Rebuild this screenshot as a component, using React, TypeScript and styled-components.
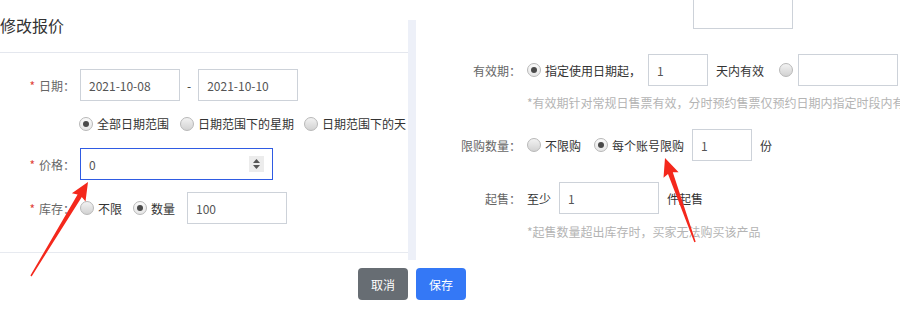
import React from 'react';
import styled, { createGlobalStyle } from 'styled-components';

const GlobalStyle = createGlobalStyle`
  html, body {
    margin: 0;
    padding: 0;
    background: #fff;
  }
  body {
    font-family: "Noto Sans CJK SC", "Liberation Sans", sans-serif;
    font-size: 12px;
    color: #333;
  }
`;

const Page = styled.div`
  position: relative;
  width: 900px;
  height: 330px;
  overflow: hidden;
  background: #fff;
`;

const Top = styled.div`
  display: flex;
  height: 260px;
`;

const LeftPanel = styled.div`
  width: 408px;
  height: 253px;
  box-sizing: border-box;
  border-bottom: 1px solid #e7eaf0;
  overflow: hidden;
  white-space: nowrap;
`;

const Header = styled.div`
  height: 53px;
  box-sizing: border-box;
  border-bottom: 1px solid #e4e7ee;
  font-size: 16px;
  line-height: 50px;
  color: #333;
`;

const Body = styled.div`
  padding-top: 16px;
`;

const Strip = styled.div`
  width: 8px;
  margin-top: 20px;
  background: #edf0f8;
`;

const RightPanel = styled.div`
  flex: 1;
  overflow: hidden;
  white-space: nowrap;
`;

const Row = styled.div<{ $mt?: number; $pl?: number }>`
  display: flex;
  align-items: center;
  margin-top: ${(p) => p.$mt ?? 0}px;
  padding-left: ${(p) => p.$pl ?? 0}px;
`;

const Label = styled.div<{ $w: number; $gap: number }>`
  width: ${(p) => p.$w}px;
  margin-right: ${(p) => p.$gap}px;
  flex-shrink: 0;
  text-align: right;
  color: #666;
  font-size: 12px;
`;

const Star = styled.span`
  color: #e0443a;
  margin-right: 4px;
`;

const Field = styled.div<{ $w: number; $ml?: number; $focus?: boolean }>`
  position: relative;
  flex-shrink: 0;
  box-sizing: border-box;
  width: ${(p) => p.$w}px;
  height: 32px;
  margin-left: ${(p) => p.$ml ?? 0}px;
  padding-left: 8px;
  display: flex;
  align-items: center;
  border: 1px solid ${(p) => (p.$focus ? '#2f5be3' : '#cdd2d9')};
  color: #555;
  font-size: 12px;
  background: #fff;
`;

const Spinner = styled.div`
  position: absolute;
  right: 8px;
  top: 7px;
  width: 15px;
  height: 16px;
  background: #ececec;
  display: flex;
  align-items: center;
  justify-content: center;
`;

const Text = styled.span<{ $ml?: number }>`
  margin-left: ${(p) => p.$ml ?? 0}px;
  color: #333;
  font-size: 12px;
`;

const Option = styled.span<{ $mr?: number }>`
  display: inline-flex;
  align-items: center;
  gap: 4px;
  margin-right: ${(p) => p.$mr ?? 0}px;
  color: #333;
  font-size: 12px;
`;

const RadioDot = styled.span<{ $on?: boolean; $ml?: number }>`
  position: relative;
  flex-shrink: 0;
  box-sizing: border-box;
  width: 14px;
  height: 14px;
  margin-left: ${(p) => p.$ml ?? 0}px;
  border-radius: 50%;
  border: 1px solid #b8b8b8;
  background: ${(p) =>
    p.$on ? 'linear-gradient(#fafafa, #e6e6e6)' : 'linear-gradient(#f2f2f2, #d2d2d2)'};
  &::after {
    content: '';
    display: ${(p) => (p.$on ? 'block' : 'none')};
    position: absolute;
    left: 3px;
    top: 3px;
    width: 6px;
    height: 6px;
    border-radius: 50%;
    background: #4a4a4a;
  }
`;

const Hint = styled.div<{ $mt: number }>`
  margin-top: ${(p) => p.$mt}px;
  padding-left: 111px;
  line-height: 18px;
  color: #b4b4b4;
  font-size: 12px;
`;

const Footer = styled.div`
  display: flex;
  gap: 8px;
  margin-top: 8px;
  padding-left: 358px;
`;

const Button = styled.button<{ $primary?: boolean }>`
  width: 50px;
  height: 32px;
  border: none;
  border-radius: 4px;
  padding: 0;
  font-family: inherit;
  font-size: 12px;
  color: #fff;
  background: ${(p) => (p.$primary ? '#3478f6' : '#676d73')};
`;

const Overlay = styled.svg`
  position: absolute;
  left: 0;
  top: 0;
  pointer-events: none;
`;

const Radio = ({ on, label, mr }: { on?: boolean; label: string; mr?: number }) => (
  <Option $mr={mr}>
    <RadioDot $on={on} />
    {label}
  </Option>
);

const LeftLabel = ({ text }: { text: string }) => (
  <Label $w={75} $gap={5}>
    <Star>*</Star>
    {text}
  </Label>
);

const RightLabel = ({ text }: { text: string }) => (
  <Label $w={105} $gap={6}>
    {text}
  </Label>
);

export default function App() {
  return (
    <Page>
      <GlobalStyle />
      <Top>
        <LeftPanel>
          <Header>修改报价</Header>
          <Body>
            <Row>
              <LeftLabel text="日期：" />
              <Field $w={100}>2021-10-08</Field>
              <Text $ml={7}>-</Text>
              <Field $w={100} $ml={7}>2021-10-10</Field>
            </Row>
            <Row $mt={14} $pl={79}>
              <Radio on label="全部日期范围" mr={11} />
              <Radio label="日期范围下的星期" mr={10} />
              <Radio label="日期范围下的天" />
            </Row>
            <Row $mt={16}>
              <LeftLabel text="价格：" />
              <Field $w={193} $focus>
                0
                <Spinner>
                  <svg width="9" height="12" viewBox="0 0 9 12">
                    <path d="M4.5 1 L8 5 H1 Z" fill="#555" />
                    <path d="M1 7 H8 L4.5 11 Z" fill="#555" />
                  </svg>
                </Spinner>
              </Field>
            </Row>
            <Row $mt={12}>
              <LeftLabel text="库存：" />
              <Radio label="不限" mr={11} />
              <Radio on label="数量" mr={12} />
              <Field $w={100}>100</Field>
            </Row>
          </Body>
        </LeftPanel>
        <Strip />
        <RightPanel>
          <Row $mt={-3} $pl={277}>
            <Field $w={100} />
          </Row>
          <Row $mt={25}>
            <RightLabel text="有效期：" />
            <Radio on label="指定使用日期起，" />
            <Field $w={60} $ml={7}>1</Field>
            <Text $ml={8}>天内有效</Text>
            <RadioDot $ml={15} />
            <Field $w={100} $ml={5} />
          </Row>
          <Hint $mt={8}>*有效期针对常规日售票有效，分时预约售票仅预约日期内指定时段内有效</Hint>
          <Row $mt={17}>
            <RightLabel text="限购数量：" />
            <Radio label="不限购" mr={13} />
            <Radio on label="每个账号限购" />
            <Field $w={60} $ml={8}>1</Field>
            <Text $ml={8}>份</Text>
          </Row>
          <Row $mt={21}>
            <RightLabel text="起售：" />
            <Text>至少</Text>
            <Field $w={100} $ml={8}>1</Field>
            <Text $ml={8}>件起售</Text>
          </Row>
          <Hint $mt={9}>*起售数量超出库存时，买家无法购买该产品</Hint>
        </RightPanel>
      </Top>
      <Footer>
        <Button>取消</Button>
        <Button $primary>保存</Button>
      </Footer>
      <Overlay width="900" height="330" viewBox="0 0 900 330">
        <polygon
          fill="#f4281c"
          points="30.4,275.6 77.6,194.4 71.9,193.3 88,182 85.5,201.5 81.8,197 31.6,276.4"
        />
        <polygon
          fill="#f4281c"
          points="694.3,242.2 668,173.9 663.5,177.7 665,158 678.6,172.3 672.8,172.3 695.7,241.8"
        />
      </Overlay>
    </Page>
  );
}
